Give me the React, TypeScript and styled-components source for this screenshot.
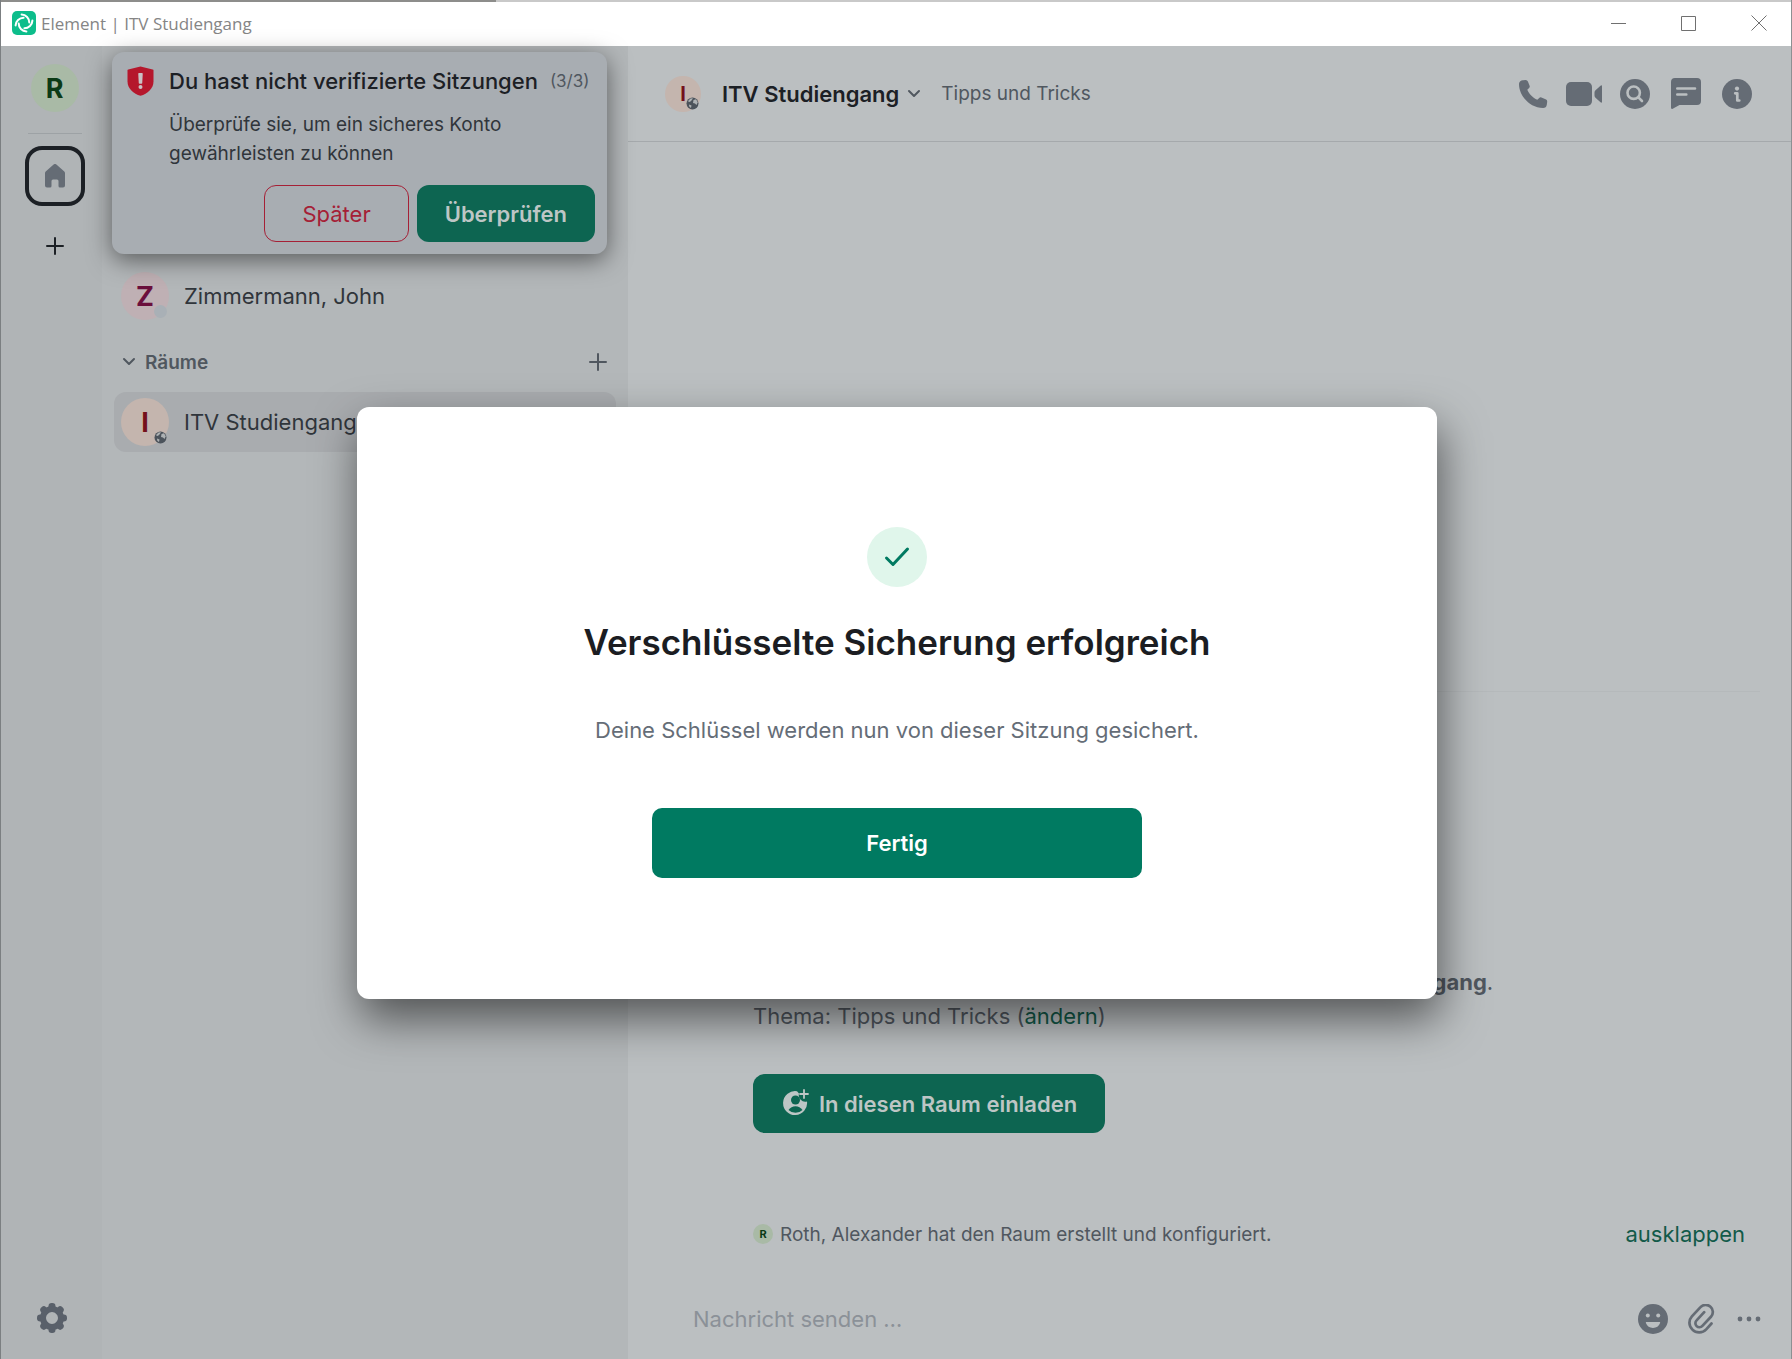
import React from "react";
import styled, { createGlobalStyle, css } from "styled-components";

const color = {
  ink: "#1c2025",
  text: "#30353b",
  muted: "#50575f",
  icon: "#656c75",
  green: "#0d6551",
  critical: "#a52036",
  rail: "#b0b4b6",
  list: "#b3b7b9",
  main: "#bbbfc1",
};

const GlobalStyle = createGlobalStyle`
  *, *::before, *::after { box-sizing: border-box; }
  html, body, #root { height: 100%; }
  body {
    margin: 0;
    overflow: hidden;
    font-family: Inter, "Liberation Sans", sans-serif;
    font-size: 22px;
    color: ${color.text};
    background: ${color.main};
  }
  button, input { font: inherit; }
  h1, h2, p { margin: 0; }
`;

const Window = styled.div`
  height: 100%;
  display: flex;
  flex-direction: column;
  border-left: 1px solid #7b7f81;
  border-right: 1px solid #8c9092;
`;

const TitleBar = styled.header`
  height: 46px;
  flex: none;
  display: flex;
  align-items: center;
  padding-left: 11px;
  gap: 5px;
  background: linear-gradient(90deg, #8d8d8b 495px, #c9c9c9 495px) top / 100% 2px no-repeat #fff;
`;

const WindowTitle = styled.span`
  flex: 1;
  padding-top: 2px;
  font: 400 17px/24px "Open Sans", "Noto Sans", sans-serif;
  color: #858585;
`;

const PlainButton = styled.button`
  display: grid;
  place-items: center;
  padding: 0;
  border: 0;
  background: none;
  color: inherit;
  cursor: pointer;
`;

const WindowButton = styled(PlainButton)`
  width: 65px;
  height: 44px;
  color: #707070;
`;

const Body = styled.div`
  position: relative;
  flex: 1;
  min-height: 0;
  display: flex;
`;

const Rail = styled.nav`
  width: 101px;
  flex: none;
  display: flex;
  flex-direction: column;
  align-items: center;
  padding: 18px 0 26px 6px;
  background: ${color.rail};
  color: ${color.ink};
`;

const RailDivider = styled.hr`
  width: 54px;
  height: 1px;
  margin: 21px 0 12px;
  border: 0;
  background: #9da2a5;
`;

const HomeButton = styled(PlainButton)`
  width: 60px;
  height: 60px;
  border: 4px solid ${color.ink};
  border-radius: 17px;
  color: ${color.icon};
`;

const AddSpaceButton = styled(PlainButton)`
  width: 48px;
  height: 48px;
  margin-top: 16px;
`;

const SettingsButton = styled(PlainButton)`
  width: 30px;
  height: 30px;
  margin-top: auto;
  margin-right: 6px;
  color: #59606a;
`;

const Avatar = styled.span<{ $size: number; $bg: string; $fg: string }>`
  position: relative;
  flex: none;
  display: grid;
  place-items: center;
  width: ${(p) => p.$size}px;
  height: ${(p) => p.$size}px;
  border-radius: 50%;
  background: ${(p) => p.$bg};
  color: ${(p) => p.$fg};
  font-size: ${(p) => Math.round(p.$size * 0.56)}px;
  font-weight: 700;
  line-height: 1;
`;

const Badge = styled.span`
  position: absolute;
  right: 2px;
  bottom: 2px;
  width: 13px;
  height: 13px;
  display: grid;
`;

const Presence = styled(Badge)`
  border-radius: 50%;
  background: #a9b0b6;
`;

const RoomList = styled.aside`
  width: 526px;
  flex: none;
  padding: 220px 12px 0;
  background: ${color.list};
`;

const RoomTile = styled.button<{ $active?: boolean }>`
  width: 100%;
  height: 60px;
  display: flex;
  align-items: center;
  gap: 15px;
  padding: 0 7px;
  border: 0;
  border-radius: 12px;
  background: ${(p) => (p.$active ? "#a9acaf" : "transparent")};
  color: ${color.text};
  font-size: 22px;
  text-align: left;
  cursor: pointer;
`;

const SectionHeader = styled.div`
  height: 48px;
  margin: 12px 0 6px;
  padding: 0 9px 0 8px;
  display: flex;
  align-items: center;
  justify-content: space-between;
  color: ${color.muted};
`;

const SectionToggle = styled(PlainButton)`
  display: flex;
  align-items: center;
  gap: 9px;
  font-size: 19px;
  font-weight: 600;
`;

const Toast = styled.section`
  position: absolute;
  left: 111px;
  top: 6px;
  width: 495px;
  height: 202px;
  display: grid;
  grid-template-columns: 27px minmax(0, 1fr);
  grid-template-rows: 30px 58px 1fr;
  column-gap: 15px;
  padding: 14px 12px 12px 15px;
  row-gap: 14px;
  border-radius: 12px;
  background: #a8adb2;
  box-shadow: 0 6px 24px rgba(0, 0, 0, 0.5);
`;

const ToastHead = styled.div`
  display: flex;
  align-items: center;
  gap: 12px;
  white-space: nowrap;
`;

const ToastTitle = styled.h2`
  font-size: 22px;
  line-height: 30px;
  font-weight: 500;
  color: ${color.ink};
`;

const ToastCount = styled.span`
  font-size: 17px;
  color: ${color.muted};
`;

const ToastText = styled.p`
  grid-column: 2;
  font-size: 19px;
  line-height: 29px;
`;

const ToastActions = styled.div`
  grid-column: 1 / -1;
  align-self: end;
  display: flex;
  justify-content: flex-end;
  gap: 8px;
`;

const Action = styled.button<{ $outline?: boolean }>`
  display: flex;
  align-items: center;
  justify-content: center;
  gap: 10px;
  height: 57px;
  padding: 0 28px;
  border: 0;
  border-radius: 12px;
  background: ${color.green};
  color: #bdc6c5;
  font-size: 22px;
  font-weight: 600;
  cursor: pointer;
  ${(p) =>
    p.$outline &&
    css`
      padding: 0 37px;
      border: 1px solid ${color.critical};
      background: none;
      color: ${color.critical};
      font-weight: 400;
    `}
`;

const Main = styled.main`
  flex: 1;
  min-width: 0;
  display: flex;
  flex-direction: column;
  background: ${color.main};
`;

const RoomHeader = styled.header`
  height: 96px;
  flex: none;
  display: flex;
  align-items: center;
  padding: 0 36px 0 37px;
  border-bottom: 1px solid #a5a9ac;
`;

const RoomName = styled(PlainButton)`
  display: flex;
  align-items: center;
  gap: 8px;
  margin: 0 20px 0 21px;
  color: ${color.muted};

  h1 {
    font-size: 22px;
    font-weight: 600;
    color: ${color.ink};
  }
`;

const Topic = styled.span`
  flex: 1;
  font-size: 19px;
  color: ${color.muted};
`;

const IconRow = styled.div`
  display: flex;
  align-items: center;
  gap: 15px;
  color: ${color.icon};
`;

const IconButton = styled(PlainButton)<{ $small?: boolean }>`
  width: ${(p) => (p.$small ? 33 : 36)}px;
  height: 36px;
`;

const Timeline = styled.div`
  flex: 1;
  min-height: 0;
  display: flex;
  flex-direction: column;
  padding: 0 31px 27px 125px;
`;

const Separator = styled.hr`
  width: 100%;
  height: 1px;
  margin: 549px 0 auto;
  border: 0;
  background: #b5b9bb;
`;

const Intro = styled.div`
  display: flex;
  flex-direction: column;
  align-items: flex-start;
  font-size: 22px;
  line-height: 34px;
  color: ${color.muted};
  white-space: nowrap;

  ${Action} {
    margin-top: 41px;
    height: 59px;
    padding: 0 28px 0 30px;
  }
`;

const Link = styled.a`
  color: #125a49;
  text-decoration: none;
`;

const EventRow = styled.div`
  display: flex;
  align-items: center;
  gap: 7px;
  height: 34px;
  margin-top: 84px;
  padding-right: 15px;
  font-size: 19px;
  color: ${color.muted};

  p { flex: 1; }
`;

const ExpandButton = styled(PlainButton)`
  font-size: 22px;
  color: #125a49;
`;

const Composer = styled.form`
  height: 81px;
  flex: none;
  display: flex;
  align-items: center;
  padding: 0 26px 0 65px;
`;

const MessageInput = styled.input`
  flex: 1;
  min-width: 0;
  padding: 0;
  border: 0;
  outline: 0;
  background: none;
  font-size: 22px;

  &::placeholder { color: #8b9198; opacity: 1; }
`;

const Backdrop = styled.div`
  position: absolute;
  inset: 0;
  display: grid;
  place-items: center;
  padding-left: 2px;
`;

const Dialog = styled.section`
  width: 1080px;
  max-width: 90%;
  display: flex;
  flex-direction: column;
  align-items: center;
  padding: 120px 40px 121px;
  border-radius: 12px;
  background: #fff;
  box-shadow: 3px 20px 45px rgba(0, 0, 0, 0.55);
  text-align: center;

  h2 {
    margin-top: 33px;
    font-size: 35px;
    line-height: 44px;
    font-weight: 600;
    color: #1b1d22;
  }

  p {
    margin: 50px 0 62px;
    font-size: 22px;
    line-height: 32px;
    color: #656d77;
  }
`;

const Success = styled.span`
  width: 60px;
  height: 60px;
  display: grid;
  place-items: center;
  border-radius: 50%;
  background: #e0f6eb;
`;

const DoneButton = styled.button`
  width: 490px;
  max-width: 100%;
  height: 70px;
  border: 0;
  border-radius: 10px;
  background: #007a61;
  color: #fff;
  font-size: 22px;
  font-weight: 600;
  cursor: pointer;
`;

const Logo = () => (
  <svg width="24" height="24" viewBox="0 0 24 24" aria-hidden="true">
    <rect width="24" height="24" rx="5" fill="#0dbd8b" />
    <g fill="none" stroke="#fff" strokeWidth="2" strokeLinecap="round">
      {[0, 90, 180, 270].map((a) => (
        <path key={a} transform={`rotate(${a} 12 12)`} d="M9.600 3.600A8 8 0 0 1 17.300 11.600" />
      ))}
    </g>
  </svg>
);

const Plus = ({ size, weight }: { size: number; weight: number }) => (
  <svg width={size} height={size} viewBox="0 0 18 18" fill="none" stroke="currentColor" strokeWidth={weight} strokeLinecap="round" aria-hidden="true">
    <path d="M9 1v16M1 9h16" />
  </svg>
);

const Chevron = () => (
  <svg width="14" height="10" viewBox="0 0 14 10" fill="none" stroke="currentColor" strokeWidth="2" strokeLinecap="round" strokeLinejoin="round" aria-hidden="true">
    <path d="M2 2l5 5 5-5" />
  </svg>
);

const Globe = () => (
  <svg width="13" height="13" viewBox="0 0 13 13" aria-hidden="true">
    <circle cx="6.500" cy="6.500" r="6" fill="#4c535b" />
    <path d="M1.800 4.200L4.500 1.500 7 1.200 5.500 3.500 3.800 5zM7.500 3l2.500-.8 1.800 3L10.500 8 9 6.500 7 6zM3 7.500l2.500 1L5 11 3.200 9.500z" fill="#adb1b3" />
  </svg>
);

const HomeIcon = () => (
  <svg width="22" height="24" viewBox="0 0 22 24" fill="currentColor" aria-hidden="true">
    <path d="M9.600.6a2 2 0 0 1 2.800 0l7.900 7A2.400 2.400 0 0 1 21 9.400V21.500a2 2 0 0 1-2 2h-3a1.500 1.500 0 0 1-1.500-1.500v-5a1.500 1.500 0 0 0-1.500-1.500H9A1.500 1.500 0 0 0 7.500 17v5A1.500 1.500 0 0 1 6 23.500H3a2 2 0 0 1-2-2V9.400a2.400 2.400 0 0 1 .7-1.800z" />
  </svg>
);

const GearIcon = () => (
  <svg width="30" height="30" viewBox="0 0 30 30" aria-hidden="true">
    <g fill="currentColor">
      {[0, 45, 90, 135, 180, 225, 270, 315].map((a) => (
        <rect key={a} transform={`rotate(${a} 15 15)`} x="11.500" y="0" width="7" height="9" rx="3.200" />
      ))}
    </g>
    <circle cx="15" cy="15" r="9" fill="none" stroke="currentColor" strokeWidth="6" />
  </svg>
);

const ShieldIcon = () => (
  <svg width="27" height="30" viewBox="0 0 27 30" aria-hidden="true">
    <path d="M13.500.5L25.700 3.500Q26.500 3.700 26.500 4.500V15.500C26.500 22.500 20.500 28 13.500 29.700 6.500 28 .5 22.500.5 15.500V4.500Q.5 3.700 1.300 3.500z" fill="#b5172c" />
    <path d="M12 7.800h3L14.500 17h-2z" fill="#c9c3c6" stroke="#c9c3c6" strokeWidth="1.500" strokeLinejoin="round" />
    <circle cx="13.500" cy="21" r="2" fill="#c9c3c6" />
  </svg>
);

const PhoneIcon = () => (
  <svg width="30" height="30" viewBox="0 0 30 30" fill="currentColor" aria-hidden="true">
    <path d="M5.200 1.200L7.500 1a2.500 2.500 0 0 1 2.400 1.500l1.700 4.300a2 2 0 0 1-.5 2.200L9.300 10.800C11 15 14.800 18.900 19.300 20.800l1.900-1.900a2 2 0 0 1 2.200-.4l4.200 1.700A2.500 2.500 0 0 1 29.200 22.800l-.4 3A3.800 3.800 0 0 1 25 29C12 29 1 17 1 5.100A3.900 3.900 0 0 1 5.200 1.200z" />
  </svg>
);

const VideoIcon = () => (
  <svg width="36" height="24" viewBox="0 0 36 24" fill="currentColor" aria-hidden="true">
    <rect width="26" height="24" rx="5" />
    <path d="M28.500 10.500a3 3 0 0 1 1-2.200l5-4.600q1.500-1 1.500.5v15.600q0 1.500-1.500.5l-5-4.600a3 3 0 0 1-1-2.200z" />
  </svg>
);

const SearchIcon = () => (
  <svg width="30" height="30" viewBox="0 0 30 30" aria-hidden="true">
    <circle cx="15" cy="15" r="15" fill="currentColor" />
    <g fill="none" stroke={color.main} strokeWidth="2.600" strokeLinecap="round">
      <circle cx="13.700" cy="13.700" r="6.200" />
      <path d="M18.400 18.400l3.600 3.600" />
    </g>
  </svg>
);

const ThreadsIcon = () => (
  <svg width="30" height="31" viewBox="0 0 30 31" aria-hidden="true">
    <path d="M4 0h22a4 4 0 0 1 4 4v19a4 4 0 0 1-4 4H8.500L1.700 30.700Q0 31.500 0 29.500V4a4 4 0 0 1 4-4z" fill="currentColor" />
    <path d="M6.300 10.500h17.700M6.300 16.500h9" stroke={color.main} strokeWidth="2.600" strokeLinecap="round" />
  </svg>
);

const InfoIcon = () => (
  <svg width="30" height="30" viewBox="0 0 30 30" aria-hidden="true">
    <circle cx="15" cy="15" r="15" fill="currentColor" />
    <circle cx="15" cy="9.600" r="2.100" fill={color.main} />
    <path d="M13.200 14.300h2.100v7.200h2" fill="none" stroke={color.main} strokeWidth="2.700" strokeLinecap="round" strokeLinejoin="round" />
  </svg>
);

const SmileIcon = () => (
  <svg width="30" height="30" viewBox="0 0 30 30" aria-hidden="true">
    <circle cx="15" cy="15" r="15" fill="currentColor" />
    <g fill={color.main}>
      <circle cx="9.800" cy="11.500" r="2" />
      <circle cx="20.200" cy="11.500" r="2" />
      <path d="M8.500 18h13c.6 0 .8.500.6 1a7.600 7.600 0 0 1-14.200 0c-.2-.5 0-1 .6-1z" />
    </g>
  </svg>
);

const ClipIcon = () => (
  <svg width="28" height="30" viewBox="0 0 28 30" fill="none" stroke="currentColor" strokeWidth="2.700" strokeLinecap="round" aria-hidden="true">
    <path d="M24.500 19.500l-5.300 5.800a9.500 9.500 0 0 1-13.800.3 9.500 9.500 0 0 1-.5-13.300L13.500 3.200a7 7 0 0 1 10-.4 7 7 0 0 1 .7 9.700l-8.800 9.400a4 4 0 0 1-5.800.2 4 4 0 0 1 0-5.700l7.600-8.200" />
  </svg>
);

const DotsIcon = () => (
  <svg width="24" height="6" viewBox="0 0 24 6" fill="currentColor" aria-hidden="true">
    <circle cx="3" cy="3" r="2.400" />
    <circle cx="12" cy="3" r="2.400" />
    <circle cx="21" cy="3" r="2.400" />
  </svg>
);

const InviteIcon = () => (
  <svg width="26" height="30" viewBox="0 0 26 30" aria-hidden="true">
    <path d="M14 2.200A12 12 0 1 0 24 12.500 6.500 6.500 0 0 1 16 4.500z" fill="currentColor" />
    <circle cx="12.500" cy="11" r="4.500" fill={color.green} />
    <path d="M5.500 21a8.500 8.500 0 0 1 14 0A10 10 0 0 1 5.500 21z" fill={color.green} />
    <path d="M21 1v8M17 5h8" stroke="currentColor" strokeWidth="1.800" strokeLinecap="round" />
  </svg>
);

const roomColors = { $bg: "#c4b5ae", $fg: "#74101b" };
const selfColors = { $bg: "#a9baa6", $fg: "#0b3a16" };

export default function App() {
  return (
    <>
      <GlobalStyle />
      <Window>
        <TitleBar>
          <Logo />
          <WindowTitle>Element | ITV Studiengang</WindowTitle>
          <WindowButton aria-label="Minimieren">
            <svg width="16" height="16" stroke="currentColor"><path d="M0 8.500h15" /></svg>
          </WindowButton>
          <WindowButton aria-label="Maximieren">
            <svg width="16" height="16" stroke="currentColor" fill="none"><path d="M.5 1.500h14v14H.5z" /></svg>
          </WindowButton>
          <WindowButton aria-label="Schließen">
            <svg width="16" height="16" stroke="currentColor"><path d="M.5.5l15 15M15.500.5l-15 15" /></svg>
          </WindowButton>
        </TitleBar>

        <Body>
          <Rail aria-label="Spaces">
            <Avatar $size={48} {...selfColors}>R</Avatar>
            <RailDivider />
            <HomeButton aria-label="Startseite"><HomeIcon /></HomeButton>
            <AddSpaceButton aria-label="Neuen Space erstellen"><Plus size={18} weight={2} /></AddSpaceButton>
            <SettingsButton aria-label="Einstellungen"><GearIcon /></SettingsButton>
          </Rail>

          <RoomList>
            <RoomTile>
              <Avatar $size={48} $bg="#bfb0b4" $fg="#6b0f3c">Z<Presence /></Avatar>
              Zimmermann, John
            </RoomTile>
            <SectionHeader>
              <SectionToggle aria-expanded="true"><Chevron />Räume</SectionToggle>
              <PlainButton aria-label="Raum hinzufügen"><Plus size={18} weight={2} /></PlainButton>
            </SectionHeader>
            <RoomTile $active>
              <Avatar $size={48} {...roomColors}>I<Badge><Globe /></Badge></Avatar>
              ITV Studiengang
            </RoomTile>
          </RoomList>

          <Main>
            <RoomHeader>
              <Avatar $size={36} {...roomColors}>I<Badge><Globe /></Badge></Avatar>
              <RoomName><h1>ITV Studiengang</h1><Chevron /></RoomName>
              <Topic>Tipps und Tricks</Topic>
              <IconRow>
                <IconButton aria-label="Sprachanruf"><PhoneIcon /></IconButton>
                <IconButton aria-label="Videoanruf"><VideoIcon /></IconButton>
                <IconButton aria-label="Suchen"><SearchIcon /></IconButton>
                <IconButton aria-label="Threads"><ThreadsIcon /></IconButton>
                <IconButton aria-label="Rauminfo"><InfoIcon /></IconButton>
              </IconRow>
            </RoomHeader>

            <Timeline>
              <Separator />
              <Intro>
                <p>Du hast diesen Raum erstellt. Dies ist der Beginn von <b>ITV Studiengang</b>.</p>
                <p>Thema: Tipps und Tricks (<Link href="#topic">ändern</Link>)</p>
                <Action><InviteIcon />In diesen Raum einladen</Action>
              </Intro>
              <EventRow>
                <Avatar $size={20} {...selfColors}>R</Avatar>
                <p>Roth, Alexander hat den Raum erstellt und konfiguriert.</p>
                <ExpandButton>ausklappen</ExpandButton>
              </EventRow>
            </Timeline>

            <Composer>
              <MessageInput aria-label="Nachricht senden" placeholder="Nachricht senden …" />
              <IconRow>
                <IconButton type="button" $small aria-label="Emoji"><SmileIcon /></IconButton>
                <IconButton type="button" $small aria-label="Anhang"><ClipIcon /></IconButton>
                <IconButton type="button" $small aria-label="Weitere Optionen"><DotsIcon /></IconButton>
              </IconRow>
            </Composer>
          </Main>

          <Toast aria-labelledby="toast-title">
            <ShieldIcon />
            <ToastHead>
              <ToastTitle id="toast-title">Du hast nicht verifizierte Sitzungen</ToastTitle>
              <ToastCount>(3/3)</ToastCount>
            </ToastHead>
            <ToastText>Überprüfe sie, um ein sicheres Konto gewährleisten zu können</ToastText>
            <ToastActions>
              <Action $outline>Später</Action>
              <Action>Überprüfen</Action>
            </ToastActions>
          </Toast>

          <Backdrop>
            <Dialog role="dialog" aria-modal="true" aria-labelledby="dialog-title">
              <Success>
                <svg width="26" height="22" viewBox="0 0 26 22" fill="none" stroke="#007a61" strokeWidth="3" strokeLinecap="round" strokeLinejoin="round" aria-hidden="true">
                  <path d="M2.500 12l6.500 6.500L23.500 3" />
                </svg>
              </Success>
              <h2 id="dialog-title">Verschlüsselte Sicherung erfolgreich</h2>
              <p>Deine Schlüssel werden nun von dieser Sitzung gesichert.</p>
              <DoneButton>Fertig</DoneButton>
            </Dialog>
          </Backdrop>
        </Body>
      </Window>
    </>
  );
}
